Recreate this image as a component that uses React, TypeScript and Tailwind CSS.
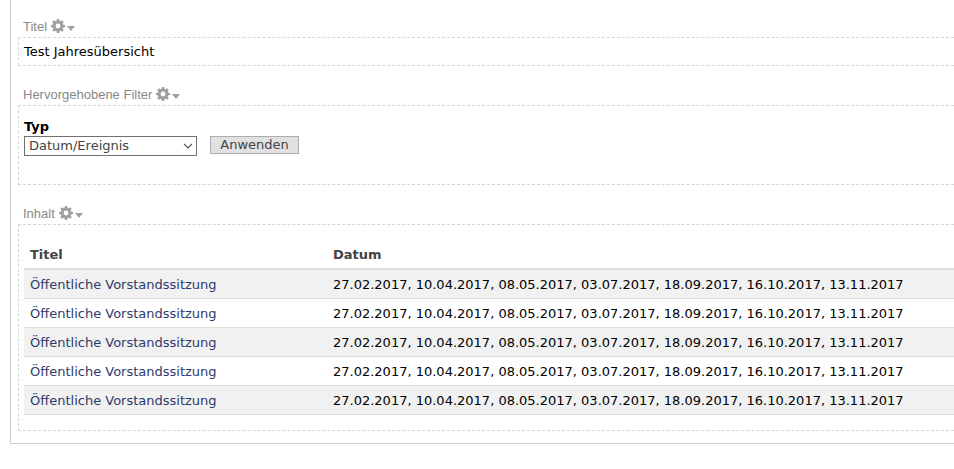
import type { ReactNode } from "react";

type Entry = {
  title: string;
  dates: string;
};

const entries: Entry[] = Array.from({ length: 5 }, () => ({
  title: "Öffentliche Vorstandssitzung",
  dates:
    "27.02.2017, 10.04.2017, 08.05.2017, 03.07.2017, 18.09.2017, 16.10.2017, 13.11.2017",
}));

const toothAngles = [0, 45, 90, 135, 180, 225, 270, 315];

function GearIcon() {
  return (
    <svg width="24" height="16" viewBox="0 0 24 16" fill="#a0a0a0" aria-hidden="true">
      <circle cx="7" cy="7" r="3.9" fill="none" stroke="#a0a0a0" strokeWidth="3" />
      {toothAngles.map((angle) => (
        <path
          key={angle}
          d="M5.4 2.6 L5.9 0 H8.1 L8.6 2.6 Z"
          transform={`rotate(${angle} 7 7)`}
        />
      ))}
      <path d="M16 7 H24 L20 12 Z" />
    </svg>
  );
}

function Region({ label, children }: { label: string; children: ReactNode }) {
  return (
    <section>
      <div className="flex h-[39px] items-end gap-1 pb-[2px] pl-1">
        <h2 className="pl-px font-['Liberation_Sans',Arial,sans-serif] text-[13px] leading-4 text-[#888888]">
          {label}
        </h2>
        <button type="button" aria-label={`${label} konfigurieren`}>
          <GearIcon />
        </button>
      </div>
      <div className="border border-r-0 border-dashed border-[#d6d6d6] pl-[5px]">
        {children}
      </div>
    </section>
  );
}

export default function App() {
  return (
    <main className="min-h-screen bg-white pl-[10px] font-[Verdana,'DejaVu_Sans',sans-serif] text-[13px] leading-5 text-black">
      <div className="border-b border-l border-[#cccccc] pb-3 pl-[7px]">
        <div className="-mt-[2px]">
          <Region label="Titel">
            <p className="pt-1 pb-[3px]">Test Jahresübersicht</p>
          </Region>

          <Region label="Hervorgehobene Filter">
            <form
              className="flex items-end gap-[13px] pt-[11px] pb-7"
              onSubmit={(event) => event.preventDefault()}
            >
              <div className="flex flex-col">
                <label htmlFor="type" className="font-bold leading-[19px]">
                  Typ
                </label>
                <div className="relative">
                  <select
                    id="type"
                    name="type"
                    className="block h-5 w-[173px] appearance-none border border-[#707070] bg-white pl-1 leading-[18px] text-[#444444]"
                  >
                    <option>Datum/Ereignis</option>
                  </select>
                  <svg
                    className="pointer-events-none absolute top-[7px] right-1"
                    width="10"
                    height="7"
                    viewBox="0 0 10 7"
                    fill="none"
                    stroke="#555555"
                    strokeWidth="1.2"
                  >
                    <path d="M1 1 L5 5 L9 1" />
                  </svg>
                </div>
              </div>
              <button
                type="submit"
                className="mb-[2px] h-[18px] w-[89px] border border-[#adadad] bg-[#e1e1e1] leading-4 text-[#444444]"
              >
                Anwenden
              </button>
            </form>
          </Region>

          <Region label="Inhalt">
            <div className="py-[15px]">
              <table className="w-full border-separate border-spacing-0 text-left">
                <thead className="text-[#444444]">
                  <tr>
                    <th className="w-[303px] border-b-2 border-[#dddddd] px-[6px] pt-[5px] pb-[3px] font-bold">
                      Titel
                    </th>
                    <th className="border-b-2 border-[#dddddd] px-[6px] pt-[5px] pb-[3px] font-bold">
                      Datum
                    </th>
                  </tr>
                </thead>
                <tbody>
                  {entries.map((entry, index) => (
                    <tr key={index} className="odd:bg-[#f1f1f1]">
                      <td className="border-b border-[#dddddd] px-[6px] pt-[5px] pb-[3px]">
                        <a href="#" className="text-[#2e3a6b]">
                          {entry.title}
                        </a>
                      </td>
                      <td className="border-b border-[#dddddd] px-[6px] pt-[5px] pb-[3px]">
                        {entry.dates}
                      </td>
                    </tr>
                  ))}
                </tbody>
              </table>
            </div>
          </Region>
        </div>
      </div>
    </main>
  );
}
